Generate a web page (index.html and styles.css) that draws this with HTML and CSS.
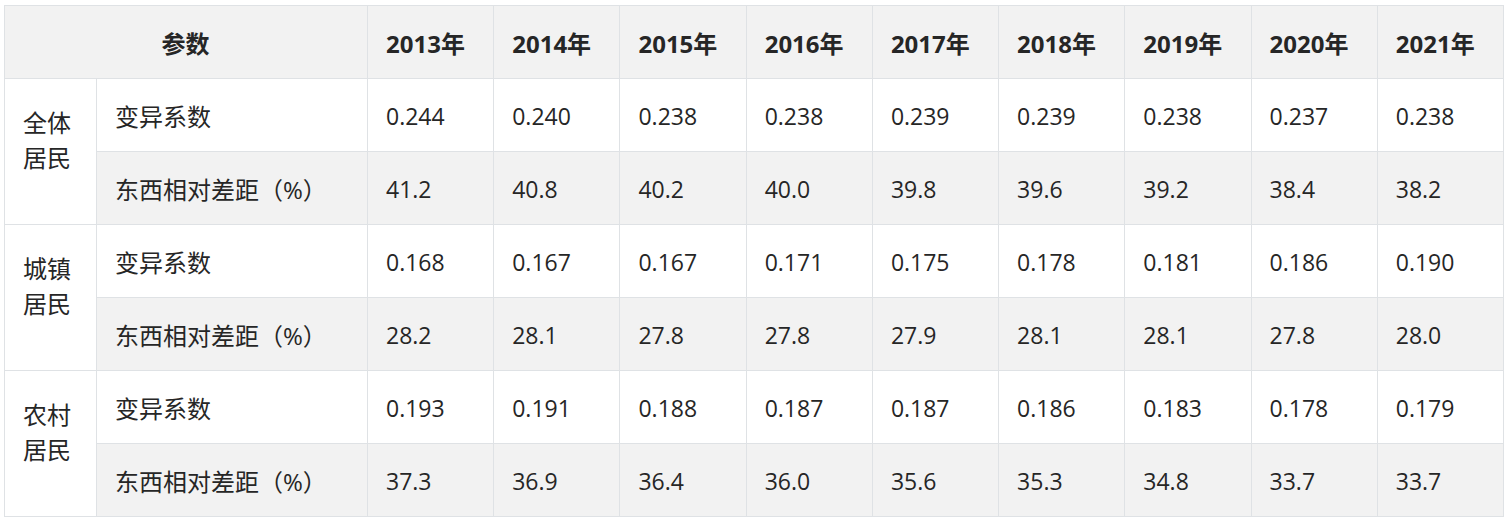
FILE: index.html
```html
<!DOCTYPE html>
<html lang="zh-CN">
<head>
<meta charset="utf-8">
<title>东西相对差距</title>
<link rel="stylesheet" href="styles.css">
</head>
<body>
<table class="data">
  <colgroup>
    <col class="c-group">
    <col class="c-name">
    <col span="9" class="c-year">
  </colgroup>
  <thead>
    <tr>
      <th colspan="2" class="h-param">参数</th>
      <th>2013年</th><th>2014年</th><th>2015年</th><th>2016年</th><th>2017年</th><th>2018年</th><th>2019年</th><th>2020年</th><th>2021年</th>
    </tr>
  </thead>
  <tbody>
    <tr>
      <td rowspan="2" class="group">全体居民</td>
      <td class="label">变异系数</td>
      <td>0.244</td><td>0.240</td><td>0.238</td><td>0.238</td><td>0.239</td><td>0.239</td><td>0.238</td><td>0.237</td><td>0.238</td>
    </tr>
    <tr class="alt">
      <td class="label">东西相对差距（%）</td>
      <td>41.2</td><td>40.8</td><td>40.2</td><td>40.0</td><td>39.8</td><td>39.6</td><td>39.2</td><td>38.4</td><td>38.2</td>
    </tr>
    <tr>
      <td rowspan="2" class="group">城镇居民</td>
      <td class="label">变异系数</td>
      <td>0.168</td><td>0.167</td><td>0.167</td><td>0.171</td><td>0.175</td><td>0.178</td><td>0.181</td><td>0.186</td><td>0.190</td>
    </tr>
    <tr class="alt">
      <td class="label">东西相对差距（%）</td>
      <td>28.2</td><td>28.1</td><td>27.8</td><td>27.8</td><td>27.9</td><td>28.1</td><td>28.1</td><td>27.8</td><td>28.0</td>
    </tr>
    <tr>
      <td rowspan="2" class="group">农村居民</td>
      <td class="label">变异系数</td>
      <td>0.193</td><td>0.191</td><td>0.188</td><td>0.187</td><td>0.187</td><td>0.186</td><td>0.183</td><td>0.178</td><td>0.179</td>
    </tr>
    <tr class="alt">
      <td class="label">东西相对差距（%）</td>
      <td>37.3</td><td>36.9</td><td>36.4</td><td>36.0</td><td>35.6</td><td>35.3</td><td>34.8</td><td>33.7</td><td>33.7</td>
    </tr>
  </tbody>
</table>
</body>
</html>
```

FILE: styles.css
```css
html, body {
  background: #ffffff;
}
body {
  margin: 5px 4px;
  font-family: "Open Sans", "Noto Sans CJK SC", sans-serif;
  font-size: 23px;
  color: #262626;
}
.data {
  border-collapse: collapse;
  table-layout: fixed;
  width: 1500px;
}
.c-group { width: 92px; }
.c-name { width: 271px; }
.data th,
.data td {
  border: 1px solid #dfe2e5;
  padding: 20px 19px 17px 18px;
  line-height: 35px;
  text-align: left;
  vertical-align: middle;
  white-space: normal;
}
.data th {
  font-weight: 700;
  font-size: 24px;
  background: #f2f2f2;
}
.data th.h-param {
  text-align: center;
}
.data td.label {
  font-size: 24px;
}
.data tr.alt td {
  background: #f2f2f2;
}
.data td.group {
  font-size: 24px;
  background: #ffffff;
  padding-top: 18px;
  padding-bottom: 41px;
}
```
